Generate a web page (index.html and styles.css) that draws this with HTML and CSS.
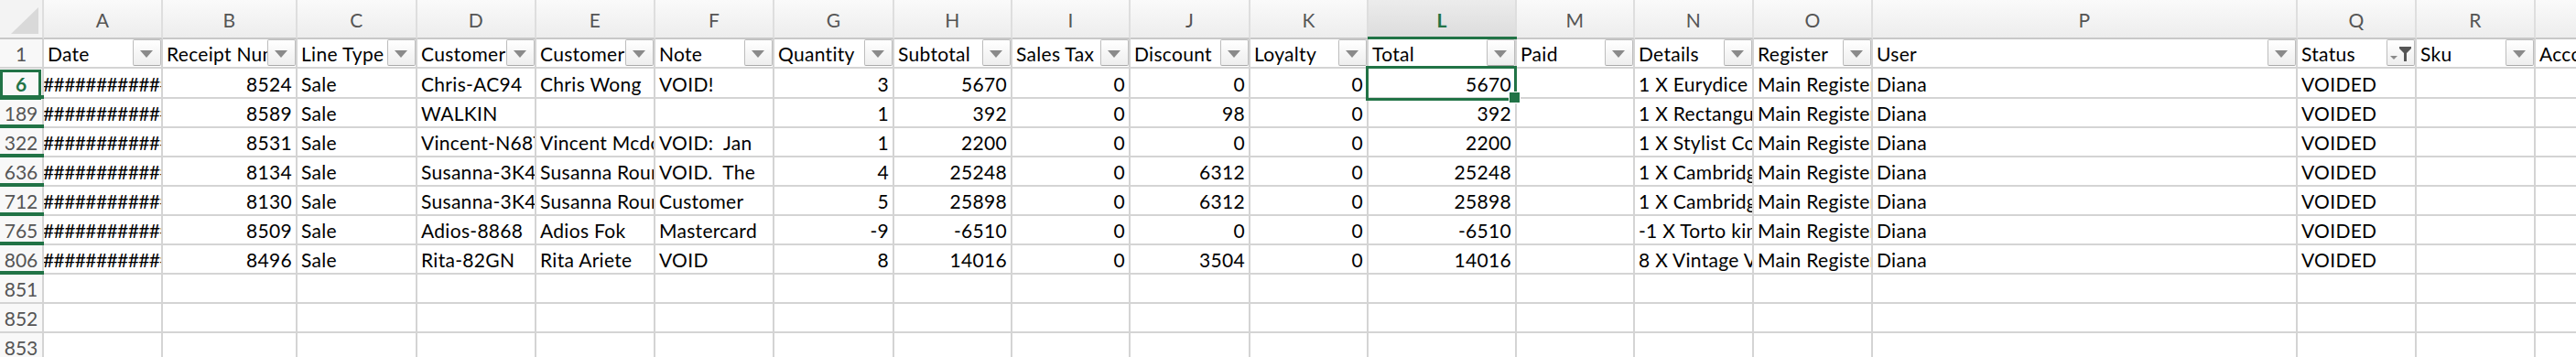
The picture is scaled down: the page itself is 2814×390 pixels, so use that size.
FILE: index.html
```html
<!DOCTYPE html>
<html>
<head>
	<meta charset="utf-8">
	<title>Sales export</title>
	<link rel="stylesheet" href="styles.css">
</head>
<body>

<!-- sheet -->
<div class="sheet">

	<!-- column letters -->
	<div class="row hd">
		<div class="corner"></div>
		<div>A</div><div>B</div><div>C</div><div>D</div><div>E</div><div>F</div><div>G</div><div>H</div><div>I</div><div>J</div><div>K</div><div class="sel">L</div><div>M</div><div>N</div><div>O</div><div>P</div><div>Q</div><div>R</div><div>S</div>
	</div>

	<!-- filter row -->
	<div class="row r1">
		<div class="rh">1</div>
		<div>Date<span class="f"></span></div>
		<div>Receipt Number<span class="f"></span></div>
		<div>Line Type<span class="f"></span></div>
		<div>Customer Code<span class="f"></span></div>
		<div>Customer Name<span class="f"></span></div>
		<div>Note<span class="f"></span></div>
		<div>Quantity<span class="f"></span></div>
		<div>Subtotal<span class="f"></span></div>
		<div>Sales Tax<span class="f"></span></div>
		<div>Discount<span class="f"></span></div>
		<div>Loyalty<span class="f"></span></div>
		<div>Total<span class="f"></span></div>
		<div>Paid<span class="f"></span></div>
		<div>Details<span class="f"></span></div>
		<div>Register<span class="f"></span></div>
		<div>User<span class="f"></span></div>
		<div>Status<span class="f on"><svg width="29" height="27" viewBox="0 0 29 27"><path d="M3 17h8l-4 4z" fill="#8a8a8a"/><path d="M13 7h13v2l-5 5v9h-3v-9l-5-5z" fill="#555"/></svg></span></div>
		<div>Sku<span class="f"></span></div>
		<div>Account<span class="f"></span></div>
	</div>

	<!-- rows -->
	<div class="row r6">
		<div class="rh cur hid">6</div>
		<div class="hash">###############</div><div class="n">8524</div><div>Sale</div><div>Chris-AC94</div><div>Chris Wong</div><div>VOID!</div>
		<div class="n">3</div><div class="n">5670</div><div class="n">0</div><div class="n">0</div><div class="n">0</div><div class="n act">5670</div><div></div>
		<div>1 X Eurydice Dress</div><div>Main Register</div><div>Diana</div><div>VOIDED</div><div></div><div></div>
	</div>
	<div class="row">
		<div class="rh hid">189</div>
		<div class="hash">###############</div><div class="n">8589</div><div>Sale</div><div>WALKIN</div><div></div><div></div>
		<div class="n">1</div><div class="n">392</div><div class="n">0</div><div class="n">98</div><div class="n">0</div><div class="n">392</div><div></div>
		<div>1 X Rectangular Tray</div><div>Main Register</div><div>Diana</div><div>VOIDED</div><div></div><div></div>
	</div>
	<div class="row">
		<div class="rh hid">322</div>
		<div class="hash">###############</div><div class="n">8531</div><div>Sale</div><div>Vincent-N68T</div><div>Vincent Mcdonald</div><div>VOID:  Jan</div>
		<div class="n">1</div><div class="n">2200</div><div class="n">0</div><div class="n">0</div><div class="n">0</div><div class="n">2200</div><div></div>
		<div>1 X Stylist Coat</div><div>Main Register</div><div>Diana</div><div>VOIDED</div><div></div><div></div>
	</div>
	<div class="row">
		<div class="rh hid">636</div>
		<div class="hash">###############</div><div class="n">8134</div><div>Sale</div><div>Susanna-3K4R</div><div>Susanna Rourke</div><div>VOID.  The</div>
		<div class="n">4</div><div class="n">25248</div><div class="n">0</div><div class="n">6312</div><div class="n">0</div><div class="n">25248</div><div></div>
		<div>1 X Cambridge Bag</div><div>Main Register</div><div>Diana</div><div>VOIDED</div><div></div><div></div>
	</div>
	<div class="row">
		<div class="rh hid">712</div>
		<div class="hash">###############</div><div class="n">8130</div><div>Sale</div><div>Susanna-3K4R</div><div>Susanna Rourke</div><div>Customer</div>
		<div class="n">5</div><div class="n">25898</div><div class="n">0</div><div class="n">6312</div><div class="n">0</div><div class="n">25898</div><div></div>
		<div>1 X Cambridge Bag</div><div>Main Register</div><div>Diana</div><div>VOIDED</div><div></div><div></div>
	</div>
	<div class="row">
		<div class="rh hid">765</div>
		<div class="hash">###############</div><div class="n">8509</div><div>Sale</div><div>Adios-8868</div><div>Adios Fok</div><div>Mastercard</div>
		<div class="n">-9</div><div class="n">-6510</div><div class="n">0</div><div class="n">0</div><div class="n">0</div><div class="n">-6510</div><div></div>
		<div>-1 X Torto kimono</div><div>Main Register</div><div>Diana</div><div>VOIDED</div><div></div><div></div>
	</div>
	<div class="row">
		<div class="rh hid">806</div>
		<div class="hash">###############</div><div class="n">8496</div><div>Sale</div><div>Rita-82GN</div><div>Rita Ariete</div><div>VOID</div>
		<div class="n">8</div><div class="n">14016</div><div class="n">0</div><div class="n">3504</div><div class="n">0</div><div class="n">14016</div><div></div>
		<div>8 X Vintage Vase</div><div>Main Register</div><div>Diana</div><div>VOIDED</div><div></div><div></div>
	</div>

	<!-- empty rows -->
	<div class="row">
		<div class="rh">851</div>
		<div></div><div></div><div></div><div></div><div></div><div></div><div></div><div></div><div></div><div></div><div></div><div></div><div></div><div></div><div></div><div></div><div></div><div></div><div></div>
	</div>
	<div class="row">
		<div class="rh">852</div>
		<div></div><div></div><div></div><div></div><div></div><div></div><div></div><div></div><div></div><div></div><div></div><div></div><div></div><div></div><div></div><div></div><div></div><div></div><div></div>
	</div>
	<div class="row">
		<div class="rh">853</div>
		<div></div><div></div><div></div><div></div><div></div><div></div><div></div><div></div><div></div><div></div><div></div><div></div><div></div><div></div><div></div><div></div><div></div><div></div><div></div>
	</div>

</div>

</body>
</html>
```

FILE: styles.css
```css
* { margin:0px; padding:0px; box-sizing:border-box; }
body { background:#fff; overflow:hidden; font:21px Lato, "Liberation Sans", sans-serif; letter-spacing:0.3px; color:#000; }

.sheet { display:grid; width:max-content;
	grid-template-columns:48px 130px 147px 131px 130px 130px 130px 131px 129px 129px 131px 129px 162px 129px 130px 130px 464px 130px 130px 200px;
	grid-template-rows:43px 32px 33px; grid-auto-rows:32px; }
.row { display:contents; }
.row > div { position:relative; border-right:2px solid #d4d4d4; border-bottom:2px solid #d4d4d4; padding:0px 4px; overflow:hidden; white-space:pre; line-height:32px; }
.r1 > div { line-height:32px; }
.r6 > div { line-height:34px; }
.n { text-align:right; }
.hash { text-indent:-5px; letter-spacing:-0.6px; }

/* column letters */
.hd > div { line-height:44px; text-align:center; color:#555; background:linear-gradient(#fafafa, #ededed); border-right-color:#dedede; border-bottom-color:#c8c8c8; }
.hd > .sel { overflow:visible; color:#217346; font-weight:bold; background:linear-gradient(#ececec, #dcdcdc); }
.hd > .sel::after { content:""; position:absolute; left:-1px; right:-2px; bottom:-2px; height:3px; background:#217346; z-index:2; }
.hd > .corner { background:#f3f3f3; }
.corner::after { content:""; position:absolute; left:12px; top:8px; width:30px; height:29px; background:#d9d9d9; clip-path:polygon(100% 0, 100% 100%, 0 100%); }

/* row numbers */
.row > .rh { overflow:visible; padding:0px; text-align:center; color:#555; background:#f8f8f8; letter-spacing:0px; }
.rh.cur { color:#217346; font-weight:bold; }
.rh.hid::after { content:""; position:absolute; left:0px; right:-2px; bottom:-2px; height:4px; background:#217346; z-index:2; }
.rh.cur::before { content:""; position:absolute; left:0px; top:1px; right:1px; bottom:-3px; border:3px solid #217346; z-index:2; }

/* filter buttons */
.f { position:absolute; right:0px; top:0px; width:31px; height:29px; border:1px solid #bdbdbd; border-bottom-color:#a9a9a9; border-radius:2px; background:linear-gradient(#fff, #eeeeee); }
.f::after { content:""; position:absolute; left:7px; top:11px; border-left:7px solid transparent; border-right:7px solid transparent; border-top:8px solid #8a8a8a; }
.f.on::after { display:none; }
.f svg { display:block; }

/* active cell */
.row > .act { overflow:visible; }
.act::before { content:""; position:absolute; left:-3px; top:-3px; right:-2px; bottom:-4px; border:3px solid #217346; z-index:3; }
.act::after { content:""; position:absolute; right:-6px; bottom:-7px; width:11px; height:11px; background:#217346; border:1px solid #fff; z-index:4; }
```
